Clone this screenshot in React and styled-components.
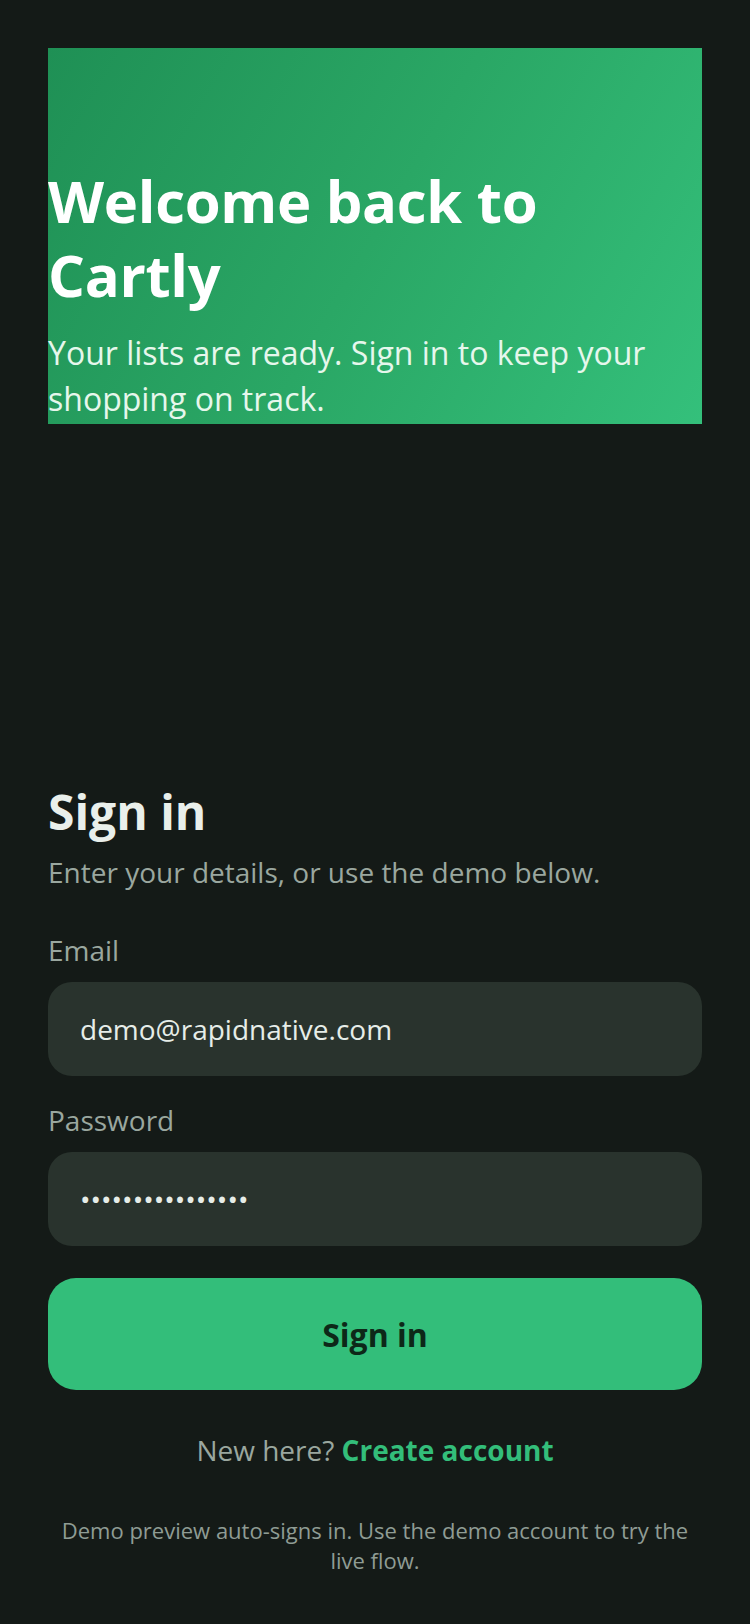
import React from "react";
import styled, { createGlobalStyle } from "styled-components";

const GlobalStyle = createGlobalStyle`
  * { box-sizing: border-box; }
  html, body { margin: 0; padding: 0; background: #141a17; }
  body { font-family: "Open Sans", "Noto Sans", sans-serif; -webkit-font-smoothing: antialiased; }
`;

const Screen = styled.main`
  min-height: 100vh;
  display: flex;
  flex-direction: column;
  padding: 48px 48px 49px;
  background: #141a17;
`;

const Hero = styled.section`
  height: 376px;
  display: flex;
  flex-direction: column;
  justify-content: flex-end;
  padding-bottom: 2px;
  background: linear-gradient(120deg, #1f9055 0%, #2aa765 50%, #34c07b 100%);
`;

const HeroTitle = styled.h1`
  margin: 0;
  font-size: 58px;
  line-height: 74px;
  font-weight: 700;
  letter-spacing: -0.3px;
  color: #ffffff;
`;

const HeroText = styled.p`
  margin: 18px 0 0;
  font-size: 32px;
  line-height: 46px;
  font-weight: 400;
  color: #e6f7ec;
`;

const Form = styled.form`
  margin-top: auto;
  display: flex;
  flex-direction: column;
`;

const Heading = styled.h2`
  margin: 0;
  font-size: 48px;
  line-height: 56px;
  font-weight: 700;
  color: #e9efeb;
`;

const Lead = styled.p`
  margin: 12px 0 0;
  font-size: 28px;
  line-height: 40px;
  color: #9aa79f;
`;

const Fields = styled.div`
  margin-top: 38px;
  display: flex;
  flex-direction: column;
  gap: 24px;
`;

const Field = styled.label`
  display: flex;
  flex-direction: column;
  gap: 12px;
`;

const LabelText = styled.span`
  font-size: 28px;
  line-height: 40px;
  color: #9aa79f;
`;

const Input = styled.input`
  height: 94px;
  width: 100%;
  border: none;
  outline: none;
  border-radius: 24px;
  padding: 0 32px;
  background: #29332d;
  color: #e6ede8;
  font-family: "Open Sans", "Noto Sans", sans-serif;
  font-size: 28px;
`;

const Button = styled.button`
  margin-top: 32px;
  height: 112px;
  border: none;
  border-radius: 28px;
  background: #33be7a;
  color: #0d2818;
  font-family: "Open Sans", "Noto Sans", sans-serif;
  font-size: 32px;
  font-weight: 700;
  cursor: pointer;
`;

const SwitchLine = styled.p`
  margin: 40px 0 0;
  text-align: center;
  font-size: 28px;
  line-height: 40px;
  color: #9aa79f;
`;

const Link = styled.a`
  color: #33be7a;
  font-weight: 700;
  text-decoration: none;
`;

const Footnote = styled.p`
  margin: 45px 0 0;
  text-align: center;
  font-size: 22px;
  line-height: 30px;
  color: #8f9c94;
`;

export default function App() {
  return (
    <>
      <GlobalStyle />
      <Screen>
        <Hero>
          <HeroTitle>Welcome back to Cartly</HeroTitle>
          <HeroText>Your lists are ready. Sign in to keep your shopping on track.</HeroText>
        </Hero>
        <Form onSubmit={(e) => e.preventDefault()}>
          <Heading>Sign in</Heading>
          <Lead>Enter your details, or use the demo below.</Lead>
          <Fields>
            <Field>
              <LabelText>Email</LabelText>
              <Input type="email" readOnly value="demo@rapidnative.com" />
            </Field>
            <Field>
              <LabelText>Password</LabelText>
              <Input type="password" readOnly value="demopassword1234" />
            </Field>
          </Fields>
          <Button type="submit">Sign in</Button>
          <SwitchLine>
            New here? <Link href="#">Create account</Link>
          </SwitchLine>
          <Footnote>Demo preview auto-signs in. Use the demo account to try the live flow.</Footnote>
        </Form>
      </Screen>
    </>
  );
}
